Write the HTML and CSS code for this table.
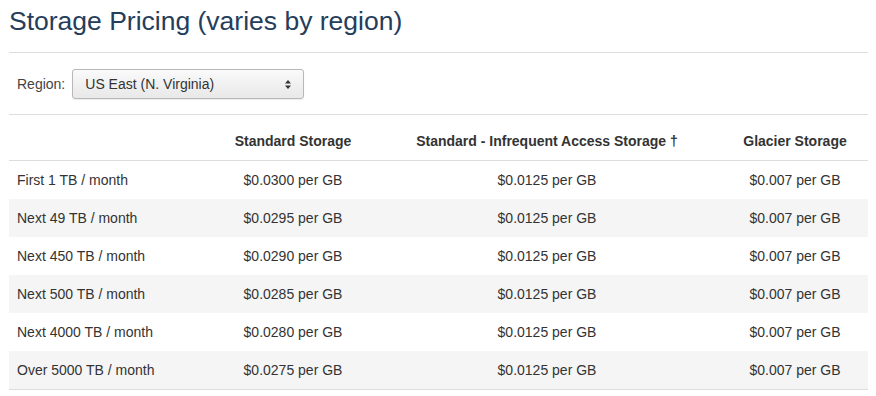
FILE: index.html
```html
<!DOCTYPE html>
<html>
<head>
<meta charset="utf-8">
<link rel="stylesheet" href="styles.css">
</head>
<body>
<div class="page">
  <h2 class="title">Storage Pricing (varies by region)</h2>
  <div class="region-bar">
    <label class="region-label">Region:</label>
    <div class="select">
      <span class="select-text">US East (N. Virginia)</span>
      <svg class="select-arrow" width="6" height="9" viewBox="0 0 6 9"><path d="M0 3.5 L3 0 L6 3.5 Z M0 5.5 L3 9 L6 5.5 Z" fill="#333"/></svg>
    </div>
  </div>
  <table class="pricing">
    <thead>
      <tr>
        <th class="c1"></th>
        <th class="c2">Standard Storage</th>
        <th class="c3">Standard - Infrequent Access Storage †</th>
        <th class="c4">Glacier Storage</th>
      </tr>
    </thead>
    <tbody>
      <tr><td class="c1">First 1 TB / month</td><td>$0.0300 per GB</td><td>$0.0125 per GB</td><td>$0.007 per GB</td></tr>
      <tr><td class="c1">Next 49 TB / month</td><td>$0.0295 per GB</td><td>$0.0125 per GB</td><td>$0.007 per GB</td></tr>
      <tr><td class="c1">Next 450 TB / month</td><td>$0.0290 per GB</td><td>$0.0125 per GB</td><td>$0.007 per GB</td></tr>
      <tr><td class="c1">Next 500 TB / month</td><td>$0.0285 per GB</td><td>$0.0125 per GB</td><td>$0.007 per GB</td></tr>
      <tr><td class="c1">Next 4000 TB / month</td><td>$0.0280 per GB</td><td>$0.0125 per GB</td><td>$0.007 per GB</td></tr>
      <tr><td class="c1">Over 5000 TB / month</td><td>$0.0275 per GB</td><td>$0.0125 per GB</td><td>$0.007 per GB</td></tr>
    </tbody>
  </table>
</div>
</body>
</html>
```
FILE: styles.css
```css
html, body {
  margin: 0;
  padding: 0;
  background: #fff;
}
body {
  font-family: "Liberation Sans", Arial, sans-serif;
  color: #333;
  font-size: 14px;
}
.page {
  margin: 0 8px 0 9px;
  width: 859px;
}
.title {
  margin: 0;
  padding: 4px 0 0 0;
  height: 48px;
  font-size: 26.5px;
  font-weight: normal;
  color: #253d5b;
  line-height: 34px;
  border-bottom: 1px solid #ddd;
  box-sizing: content-box;
}
.region-bar {
  display: flex;
  align-items: center;
  height: 61px;
  border-bottom: 1px solid #ddd;
  padding-left: 8px;
}
.region-label {
  color: #444;
  margin-right: 7px;
}
.select {
  display: flex;
  align-items: center;
  justify-content: space-between;
  width: 232px;
  height: 30px;
  border: 1px solid #b8b8b8;
  border-radius: 3px;
  background: linear-gradient(#fafafa, #e8e8e8);
  box-shadow: 0 1px 1px rgba(0,0,0,0.08);
  padding: 0 12px 0 12px;
  box-sizing: border-box;
  margin-top: 1px;
}
.select-text {
  color: #333;
}
.pricing {
  width: 859px;
  border-collapse: collapse;
  table-layout: fixed;
}
.pricing th {
  height: 34px;
  font-weight: bold;
  color: #333;
  text-align: center;
  border-bottom: 1px solid #ddd;
  padding: 0 8px 11px 8px;
  vertical-align: bottom;
}
.pricing th.c1 { width: 189px; }
.pricing th.c2 { width: 142px; }
.pricing th.c3 { width: 334px; }
.pricing td {
  height: 38px;
  padding: 0 8px;
  text-align: center;
  vertical-align: middle;
  color: #333;
}
.pricing td.c1 {
  text-align: left;
}
.pricing tbody tr:nth-child(even) td {
  background: #f5f5f5;
}
.pricing tbody tr:last-child td {
  border-bottom: 1px solid #ddd;
}
```
